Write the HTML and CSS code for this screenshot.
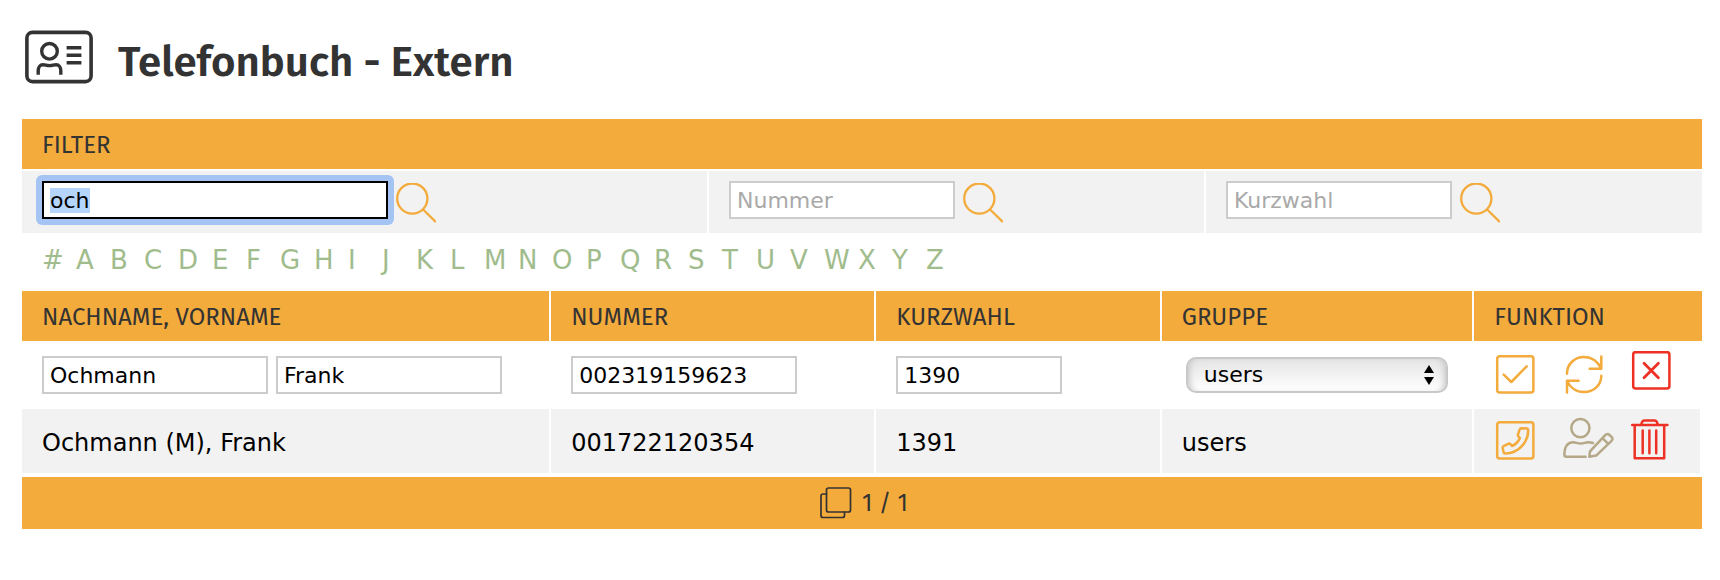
FILE: index.html
```html
<!DOCTYPE html>
<html lang="de">
<head>
<meta charset="utf-8">
<title>Telefonbuch - Extern</title>
<link rel="stylesheet" href="styles.css">
</head>
<body>
<svg class="sprite" aria-hidden="true">
  <symbol id="search" viewBox="0 0 40 40"><circle cx="16.3" cy="15.6" r="15.1"/><path d="M27.3 26.8L39.2 38.4"/></symbol>
</svg>
<main class="page">
  <header class="title">
    <svg class="title-icon" viewBox="0 0 68 53" aria-hidden="true">
      <rect x="1.9" y="1.9" width="64.2" height="49.2" rx="5.5" stroke-width="3.6"/>
      <circle cx="24.5" cy="20.8" r="7.8"/>
      <path d="M13.200 44.200V40.200c0-3.400 1.800-6 4.700-6 2.400 0 3.600.9 6.600.9s4.200-.9 6.600-.9c2.900 0 4.700 2.600 4.700 6v4M41.600 17.200h14.800M41.600 24.700h14.800M41.600 32.200h14.800"/>
    </svg>
    <h1>Telefonbuch - Extern</h1>
  </header>

  <form class="filter">
    <h2 class="bar">FILTER</h2>
    <div class="filter-row">
      <div class="filter-cell">
        <div class="focus-ring"><input class="field field-wide" id="name" type="text" value="och" aria-label="Name" autofocus></div>
        <button class="search" type="submit" aria-label="Name suchen"><svg><use href="#search"/></svg></button>
      </div>
      <div class="filter-cell">
        <div class="focus-ring"><input class="field" type="text" placeholder="Nummer" aria-label="Nummer"></div>
        <button class="search" type="submit" aria-label="Nummer suchen"><svg><use href="#search"/></svg></button>
      </div>
      <div class="filter-cell">
        <div class="focus-ring"><input class="field" type="text" placeholder="Kurzwahl" aria-label="Kurzwahl"></div>
        <button class="search" type="submit" aria-label="Kurzwahl suchen"><svg><use href="#search"/></svg></button>
      </div>
    </div>
  </form>

  <nav class="letters" aria-label="Anfangsbuchstabe">
    <a href="#">#</a><a href="#A">A</a><a href="#B">B</a><a href="#C">C</a><a href="#D">D</a><a href="#E">E</a><a href="#F">F</a><a href="#G">G</a><a href="#H">H</a><a href="#I">I</a><a href="#J">J</a><a href="#K">K</a><a href="#L">L</a><a href="#M">M</a><a href="#N">N</a><a href="#O">O</a><a href="#P">P</a><a href="#Q">Q</a><a href="#R">R</a><a href="#S">S</a><a href="#T">T</a><a href="#U">U</a><a href="#V">V</a><a href="#W">W</a><a href="#X">X</a><a href="#Y">Y</a><a href="#Z">Z</a>
  </nav>

  <table class="entries">
    <colgroup><col class="col-name"><col class="col-number"><col class="col-short"><col class="col-group"><col class="col-action"></colgroup>
    <thead>
      <tr><th>NACHNAME, VORNAME</th><th>NUMMER</th><th>KURZWAHL</th><th>GRUPPE</th><th>FUNKTION</th></tr>
    </thead>
    <tbody>
      <tr class="edit">
        <td><div class="pair"><input class="field" type="text" value="Ochmann" aria-label="Nachname"><input class="field" type="text" value="Frank" aria-label="Vorname"></div></td>
        <td><div class="pair"><input class="field" type="text" value="002319159623" aria-label="Nummer"></div></td>
        <td><div class="pair"><input class="field field-short" type="text" value="1390" aria-label="Kurzwahl"></div></td>
        <td>
          <div class="group">
            <select aria-label="Gruppe"><option>users</option></select>
            <svg class="arrows" viewBox="0 0 10 20" aria-hidden="true"><path d="M5 0l5 8H0zM5 20l5-8H0z"/></svg>
          </div>
        </td>
        <td>
          <div class="actions">
            <button type="button" class="orange" aria-label="Speichern"><svg viewBox="0 0 52 48"><rect x="2.200" y="5.200" width="36.200" height="36.200" rx="2.500"/><path d="M8.700 23.700l7.600 7.300 15.400-15.700"/></svg></button>
            <button type="button" class="orange" aria-label="Zurücksetzen"><svg viewBox="0 0 52 48"><path d="M4 22.700C4 13.200 11.500 5.900 21 5.900c7.500 0 14 4.600 17.300 11.800M38.300 5.500v12.200H26.700M38.300 24.700C38.300 34 30.800 41 21 41 13.500 41 7 36.800 4 29.700M4 41.500V29.700h11.600"/></svg></button>
            <button type="button" class="red" aria-label="Abbrechen"><svg viewBox="0 0 52 48"><rect x="2.200" y="1.200" width="36.200" height="36.200" rx="2.500"/><path stroke-width="2.800" d="M13 12.300l14.400 14.400M27.400 12.300L13 26.700"/></svg></button>
          </div>
        </td>
      </tr>
      <tr class="view">
        <td>Ochmann (M), Frank</td>
        <td>001722120354</td>
        <td>1391</td>
        <td>users</td>
        <td class="functions">
          <div class="actions">
            <button type="button" class="orange" aria-label="Anrufen"><svg viewBox="0 0 52 48"><rect x="2.200" y="5.200" width="36.200" height="36.200" rx="2.500"/><path d="M26.300 11.200L31.500 11.400Q33.200 11.600 33.200 13.400C33.200 24 24.500 36.300 10.300 36.400Q8.800 36.400 8.500 34.900L7.700 30.900Q7.500 29.700 8.600 29.200L13.200 26.900Q14.600 26.200 15.400 27.200L17 29C20.400 27.600 23 25 24.900 21.100L23.500 19.500Q22.500 18.500 23 17.300L24.700 12.400Q25.100 11.200 26.300 11.200Z"/></svg></button>
            <button type="button" class="olive" aria-label="Bearbeiten"><svg viewBox="0 0 52 48"><circle cx="17.400" cy="11.100" r="9.100"/><path d="M22.600 39.800H3.200Q1.400 39.800 1.400 38V36C1.400 30 4.500 25.300 10 25.300c3 0 4.300 1.200 7.600 1.200s4.800-1.300 8-1.300q2.200 0 4.300.8M26.300 39.800L27 34.400 42.200 18.200Q44.300 16 46.500 18L48.500 19.900Q50.500 21.800 48.500 23.900L33.200 38.600ZM39.400 21.200l5.900 5.600"/></svg></button>
            <button type="button" class="red" aria-label="Löschen"><svg viewBox="0 0 52 48"><path d="M1.200 8h35.200M3.700 8v33.200h29.500V8M10.200 7.800Q11 3.400 13.600 3.400H23.400Q26 3.400 26.800 7.800M11.700 13.500v22.800M18.400 13.500v22.800M25.200 13.500v22.800"/></svg></button>
          </div>
        </td>
      </tr>
    </tbody>
  </table>

  <footer class="pager">
    <svg viewBox="0 0 32 32" aria-hidden="true"><rect x="6.500" y="1" width="24" height="24" rx="2"/><path d="M6.500 7H3Q1 7 1 9V28.500Q1 30.500 3 30.500H22.500Q24.500 30.500 24.500 28.500V25"/></svg>
    <span>1 / 1</span>
  </footer>
</main>
<script>document.getElementById("name").focus(); document.getElementById("name").select();</script>
</body>
</html>
```
FILE: styles.css
```css
* { box-sizing: border-box; }

body {
  margin: 0;
  background: #fff;
  color: #000;
  font-family: Verdana, "DejaVu Sans", sans-serif;
  font-size: 24px;
}

.sprite { display: none; }

svg {
  display: block;
  fill: none;
  stroke: currentColor;
  stroke-linecap: round;
  stroke-linejoin: round;
}

.page { padding: 30px 18px 50px 22px; }

.title {
  display: flex;
  align-items: center;
  gap: 25px;
  height: 54px;
  margin: 0 0 35px 3px;
  color: #333;
}
.title-icon { width: 68px; height: 54px; stroke-width: 3.4; stroke-linecap: butt; }
.title h1 {
  margin: 0;
  padding-top: 10px;
  font: 600 42px/48px "Fira Sans", "Noto Sans", sans-serif;
}

.bar, .entries th, .pager {
  background: #f3ab3c;
  color: #333;
  font: 400 24px/30px "Fira Sans", "Noto Sans", sans-serif;
}
.bar { margin: 0; padding: 11px 20px 9px; }

.filter-row {
  display: grid;
  grid-template-columns: 685fr 495fr 496fr;
  gap: 2px;
  padding-top: 2px;
}
.filter-cell {
  display: flex;
  align-items: flex-start;
  gap: 8px;
  height: 62px;
  padding: 10px 20px;
  background: #f2f2f2;
}

.field {
  display: block;
  width: 226px;
  height: 38px;
  padding: 0 6px;
  border: 2px solid #ccc;
  background: #fff;
  color: #000;
  font: 22px/26px Verdana, "DejaVu Sans", sans-serif;
}
.field::placeholder { color: #a9a9a9; }
.field::selection { background: #b5d5fd; color: #000; }
.field:focus {
  border-color: #000;
  outline: none;
}
.focus-ring { border-radius: 2px; }
.focus-ring:focus-within { box-shadow: 0 0 0 6px #a4c4f4; }
.field-wide { width: 346px; }
.field-short { width: 166px; }

button {
  padding: 0;
  border: 0;
  background: none;
  cursor: pointer;
}
.search { width: 40px; height: 40px; margin-top: 2px; color: #f3ab3c; }
.search svg { width: 40px; height: 40px; stroke-width: 2.3; }

.letters { display: flex; padding: 7px 20px 11px; }
.letters a {
  width: 34px;
  color: #a1bc8c;
  font-size: 26px;
  line-height: 40px;
  text-decoration: none;
}

.entries {
  width: 100%;
  table-layout: fixed;
  border-collapse: separate;
  border-spacing: 0;
}
.col-name { width: 31.5%; }
.col-number { width: 19.35%; }
.col-short { width: 17%; }
.col-group { width: 18.6%; }
.col-action { width: 13.55%; }
.entries th {
  height: 50px;
  padding: 11px 20px 9px;
  border-right: 2px solid #fff;
  text-align: left;
}
.entries th:last-child { border-right: 0; }
.entries td { padding: 0 0 0 20px; border-right: 2px solid #fff; }
.edit td { height: 68px; }
.view td { height: 64px; padding-top: 4px; background: #f2f2f2; }
.view .functions { padding-top: 0; }
.pair { display: flex; gap: 8px; }

.group { position: relative; width: 262px; margin-left: 4px; }
.group select {
  display: block;
  width: 100%;
  height: 36px;
  padding: 0 16px;
  appearance: none;
  border: 2px solid #c8c8c8;
  border-radius: 10px;
  background: linear-gradient(#e4e4e4, #fff);
  box-shadow: inset 6px 0 6px -4px #c8c8c8, inset -6px 0 6px -4px #c8c8c8;
  color: #000;
  font: 22px/26px Verdana, "DejaVu Sans", sans-serif;
}
.arrows {
  position: absolute;
  top: 8px;
  right: 14px;
  width: 10px;
  height: 20px;
  fill: #000;
  stroke: none;
  pointer-events: none;
}

.actions { display: grid; grid-template-columns: 68px 68px 52px; margin-left: 1px; }
.actions svg { width: 52px; height: 48px; stroke-width: 2.5; }
.orange { color: #f3ab3c; }
.olive { color: #b5a888; }
.red { color: #ee3124; }

.pager {
  display: flex;
  align-items: center;
  justify-content: center;
  gap: 10px;
  height: 52px;
  margin-top: 4px;
  padding-left: 4px;
}
.pager svg { width: 32px; height: 32px; stroke-width: 1.7; }
```
